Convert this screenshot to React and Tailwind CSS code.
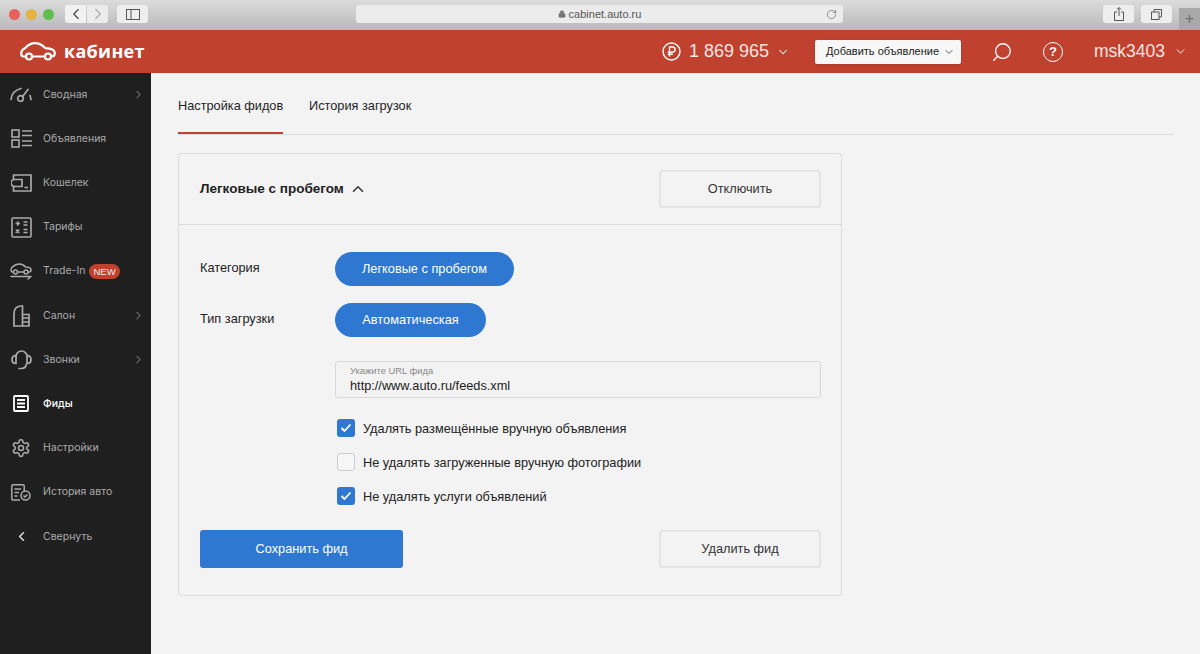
import { ChevronDown, ChevronLeft, ChevronRight, ChevronUp, RotateCw, Lock, Search } from 'lucide-react';

const Gauge = () => (
    <svg width="22" height="15" viewBox="0 0 22 15" fill="none" stroke="currentColor" strokeWidth="1.700" strokeLinecap="round">
        <path d="M1 12.500C1.500 7 5 3 11 1.500" />
        <path d="M13 9l5-6.500" />
        <circle cx="10.500" cy="11.500" r="2.800" />
        <path d="M20 8.500l1 4" />
    </svg>
);

const Listing = () => (
    <svg width="21" height="19" viewBox="0 0 21 19" fill="none" stroke="currentColor" strokeWidth="1.600">
        <rect x="1" y="1" width="7" height="7" />
        <rect x="1" y="11" width="7" height="7" />
        <path d="M11 2h10M11 6.500h10M11 12h10M11 16.500h10" />
    </svg>
);

const Wallet = () => (
    <svg width="21" height="18" viewBox="0 0 21 18" fill="none" stroke="currentColor" strokeWidth="1.700">
        <path d="M2.500 5.500V1h17.500v16H2.500v-4.500" />
        <path d="M11 5.500H3.500a3.500 3.500 0 0 0 0 7H11z" />
        <path d="M13.500 13.500h3.500" />
    </svg>
);

const Calc = () => (
    <svg width="21" height="21" viewBox="0 0 21 21" fill="none" stroke="currentColor" strokeWidth="1.600">
        <rect x="1" y="1" width="19" height="19" rx="1" />
        <path d="M4.500 6.500h4.500M6.750 4.250v4.500M12.500 5h4M12.500 8h4M4.800 12.500l3.500 3.500M8.300 12.500l-3.500 3.500M12.500 12.500h4M12.500 15.500h4" />
    </svg>
);

const TradeIn = () => (
    <svg width="22" height="17" viewBox="0 0 22 17" fill="none" stroke="currentColor" strokeWidth="1.500" strokeLinecap="round" strokeLinejoin="round">
        <path d="M3.500 9H2.200C1.200 9 1 8 1 7c0-1.500.5-2.500 1.500-3C5 1.500 7.500 1 9.500 1c2.500 0 4.500 1.200 6 3 3 0 5.500 1 5.500 3 0 1.300-.8 2-2 2h-.5" />
        <path d="M8 9h6" />
        <circle cx="5.500" cy="9" r="2" />
        <circle cx="16" cy="9" r="2" />
        <path d="M1 13.500h20l-3 2.500" />
    </svg>
);

const Salon = () => (
    <svg width="17" height="22" viewBox="0 0 17 22" fill="none" stroke="currentColor" strokeWidth="1.700">
        <path d="M1 21V8.500C1 4.500 3.500 1.500 7.500 1H9.500v20z" />
        <path d="M9.500 9.500h6.500v11.500H9.500" />
        <path d="M10 13h6M10 17h6" />
    </svg>
);

const Headset = () => (
    <svg width="21" height="20" viewBox="0 0 21 20" fill="none" stroke="currentColor" strokeWidth="1.700" strokeLinecap="round">
        <path d="M5 6.500C5 3.500 7.500 1 10.500 1S16 3.500 16 6.500" />
        <path d="M5 5.500v8C2.500 13.500 1 11.800 1 9.500S2.500 5.500 5 5.500z" />
        <path d="M16 5.500v8c2.500 0 4-1.700 4-4s-1.500-4-4-4z" />
        <path d="M15.500 14c-.5 2.500-2.500 4.500-5 4.500H8" />
    </svg>
);

const Feeds = () => (
    <svg width="16" height="17" viewBox="0 0 16 17" fill="none" stroke="currentColor" strokeWidth="1.800">
        <rect x="1" y="1" width="14" height="15" rx="1" />
        <path d="M4 5h8M4 8.500h8M4 12h8" />
    </svg>
);

const Gear = () => (
    <svg width="20" height="20" viewBox="0 0 24 24" fill="none" stroke="currentColor" strokeWidth="1.900" strokeLinejoin="round">
        <path d="M12.220 2h-.44a2 2 0 0 0-2 2v.18a2 2 0 0 1-1 1.730l-.43.250a2 2 0 0 1-2 0l-.150-.080a2 2 0 0 0-2.730.730l-.220.380a2 2 0 0 0 .730 2.730l.150.100a2 2 0 0 1 1 1.720v.510a2 2 0 0 1-1 1.740l-.150.090a2 2 0 0 0-.730 2.730l.220.380a2 2 0 0 0 2.730.730l.150-.080a2 2 0 0 1 2 0l.430.250a2 2 0 0 1 1 1.730V20a2 2 0 0 0 2 2h.44a2 2 0 0 0 2-2v-.18a2 2 0 0 1 1-1.730l.430-.250a2 2 0 0 1 2 0l.150.080a2 2 0 0 0 2.730-.730l.220-.390a2 2 0 0 0-.730-2.730l-.150-.080a2 2 0 0 1-1-1.740v-.500a2 2 0 0 1 1-1.740l.150-.090a2 2 0 0 0 .730-2.730l-.220-.380a2 2 0 0 0-2.730-.730l-.150.080a2 2 0 0 1-2 0l-.430-.250a2 2 0 0 1-1-1.730V4a2 2 0 0 0-2-2z" />
        <circle cx="12" cy="12" r="3" />
    </svg>
);

const History = () => (
    <svg width="20" height="17" viewBox="0 0 20 17" fill="none" stroke="currentColor" strokeWidth="1.500">
        <path d="M9 16H2a1.200 1.200 0 0 1-1.200-1.200V2A1.200 1.200 0 0 1 2 .8h10A1.200 1.200 0 0 1 13.200 2v5" />
        <path d="M3.500 5h6.500M3.500 8.500h4.500M3.500 12h3" />
        <circle cx="14.500" cy="11.500" r="4.500" />
        <path d="M12.500 11.500l1.500 1.500 2.500-2.500" />
    </svg>
);

const menu = [
    { icon: <Gauge />, label: 'Сводная', arrow: true },
    { icon: <Listing />, label: 'Объявления' },
    { icon: <Wallet />, label: 'Кошелек' },
    { icon: <Calc />, label: 'Тарифы' },
    { icon: <TradeIn />, label: 'Trade-In', badge: true },
    { icon: <Salon />, label: 'Салон', arrow: true },
    { icon: <Headset />, label: 'Звонки', arrow: true },
    { icon: <Feeds />, label: 'Фиды', active: true },
    { icon: <Gear />, label: 'Настройки' },
    { icon: <History />, label: 'История авто' },
    { icon: <ChevronLeft size={15} strokeWidth={2.500} className="text-[#ddd]" />, label: 'Свернуть' },
];

const Light = ({ color }) => <span className={`w-[11px] h-[11px] rounded-full ${color}`} />;

const BrowserBar = () => (
    <div className="h-[30px] flex bg-gradient-to-b from-[#dcdcdc] to-[#b9b9b9] shrink-0">
        <div className="flex items-center gap-[6px] pl-[9px] pb-[2px]">
            <Light color="bg-[#e9605a]" />
            <Light color="bg-[#e5b33f]" />
            <Light color="bg-[#5fbf4e]" />
        </div>
        <div className="flex items-center gap-px ml-[11px] pb-[2px]">
            <div className="w-[21px] h-[18px] rounded-l-[3px] bg-[#f1f1f1] flex items-center justify-center">
                <ChevronLeft size={18} strokeWidth={1.500} className="text-[#444]" />
            </div>
            <div className="w-[21px] h-[18px] rounded-r-[3px] bg-[#ececec] flex items-center justify-center">
                <ChevronRight size={18} strokeWidth={1.500} className="text-[#aaa]" />
            </div>
        </div>
        <div className="flex items-center ml-[9px] pb-[2px]">
            <div className="w-[31px] h-[18px] rounded-[3px] bg-[#eeeeee] flex items-center justify-center">
                <svg width="14" height="11" viewBox="0 0 14 11" fill="none" stroke="#555" strokeWidth="1">
                    <rect x="0.500" y="0.500" width="13" height="10" />
                    <path d="M5 0.500v10" />
                </svg>
            </div>
        </div>
        <div className="flex items-center ml-[208px] pb-[2px]">
            <div className="w-[487px] h-[18px] rounded-[3px] bg-[#ececec] relative flex items-center justify-center gap-[3px] text-[11px] text-[#555] font-['Liberation_Sans',sans-serif]">
                <Lock size={8} className="text-[#777]" fill="#777" />
                <span>cabinet.auto.ru</span>
                <RotateCw size={11} strokeWidth={1.500} className="absolute right-[6px] top-[4px] text-[#666]" />
            </div>
        </div>
        <div className="flex items-center ml-[260px] pb-[2px] gap-[7px]">
            <div className="w-[31px] h-[18px] rounded-[3px] bg-[#eeeeee] flex items-center justify-center">
                <svg width="10" height="14" viewBox="0 0 10 14" fill="none" stroke="#555" strokeWidth="1">
                    <path d="M3 5H.5v8.500h9V5H7" />
                    <path d="M5 9V.800M3 2.500 5 .500l2 2" />
                </svg>
            </div>
            <div className="w-[31px] h-[18px] rounded-[3px] bg-[#eeeeee] flex items-center justify-center">
                <svg width="11" height="11" viewBox="0 0 11 11" fill="none" stroke="#555" strokeWidth="1">
                    <rect x="0.500" y="3" width="7.500" height="7.500" />
                    <path d="M3 3V.500h7.500V8H8" />
                </svg>
            </div>
        </div>
        <div className="ml-[7px] mt-[8px] w-[21px] h-[22px] bg-[#a9a9a9] flex items-center justify-center text-[#6f6f6f] text-[16px] font-['Liberation_Sans',sans-serif]">+</div>
    </div>
);

const TopBar = () => (
    <div className="h-[43px] bg-[#c1412f] flex items-center text-white shrink-0 whitespace-nowrap font-['Liberation_Sans',sans-serif]">
        <div className="ml-[20px] w-[36px] flex">
            <svg width="36" height="19" viewBox="0 0 36 19" fill="none" stroke="white" strokeWidth="2.200" strokeLinejoin="round" strokeLinecap="round">
                <path d="M6 14.500H3.500C2 14.500 1.200 13.500 1.200 12c0-3 1.500-5 3.800-5.800C8 3 11 1.200 15 1.200c4.500 0 7.500 2 10.500 5 4 .2 9.300 1 9.300 4.800 0 2-1.200 3.500-3 3.500H31" />
                <path d="M12 14.500h13" />
                <circle cx="9" cy="14.500" r="3" />
                <circle cx="28" cy="14.500" r="3" />
            </svg>
        </div>
        <span className="ml-[8px] text-[18px] font-bold tracking-[0.3px] font-['Open_Sans',sans-serif] leading-none pb-[2px]">кабинет</span>

        <div className="ml-auto flex items-center pr-[13px]">
            <svg width="19" height="19" viewBox="0 0 19 19" fill="none" stroke="white" strokeWidth="1.400">
                <circle cx="9.500" cy="9.500" r="8.500" />
                <path d="M7.500 14.500V5h3a2.500 2.500 0 0 1 0 5.200H5.800M5.800 12.300h5" />
            </svg>
            <span className="ml-[8px] text-[18px] text-[#f6e5e2]">1 869 965</span>
            <ChevronDown size={14} strokeWidth={1.800} className="ml-[7px]" />
            <div className="ml-[25px] w-[146px] h-[24px] rounded-[2px] bg-[#f7f7f7] text-[#222] text-[11px] flex items-center pl-[11px] gap-[4px] shadow-sm">
                Добавить объявление
                <ChevronDown size={12} strokeWidth={1.500} />
            </div>
            <Search size={22} strokeWidth={1.500} className="ml-[30px] -scale-x-100" />
            <div className="ml-[30px] w-[20px] h-[20px] rounded-full border-[1.500px] border-white flex items-center justify-center text-[13px] font-bold">?</div>
            <span className="ml-[31px] text-[17.500px] text-[#f6e5e2]">msk3403</span>
            <ChevronDown size={13} strokeWidth={1.800} className="ml-[9px]" />
        </div>
    </div>
);

const Sidebar = () => (
    <div className="w-[151px] bg-[#1f1f1f] shrink-0 font-['Inter',sans-serif]">
        {menu.map( item => (
            <div key={item.label} className={`h-[44.2px] pb-[1px] flex items-center relative ${ item.active ? 'text-white' : 'text-[#aaaaaa]' }`}>
                <div className="w-[43px] shrink-0 pl-[10px] pr-[11px] flex justify-center">{item.icon}</div>
                <span className={`text-[10.500px] ${ item.active ? 'font-medium' : '' }`}>{item.label}</span>
                {item.badge && <span className="ml-[4px] h-[15px] px-[4px] rounded-full bg-[#c1412f] text-[#eee] text-[9.500px] leading-[15px] font-['Liberation_Sans',sans-serif]">NEW</span>}
                {item.arrow && <ChevronRight size={13} strokeWidth={1.500} className="absolute right-[6px] top-[15px]" />}
            </div>
        ))}
    </div>
);

const Outline = ({ children }) => (
    <div className="w-[162px] h-[38px] border-2 border-[#e5e5e5] rounded-[3px] flex items-center justify-center text-[12.750px] text-[#333]">{children}</div>
);

const Pill = ({ width, children }) => (
    <div className={`h-[34px] ${width} rounded-full bg-[#2f78d2] text-white text-[12.750px] flex items-center justify-center`}>{children}</div>
);

const Check = ({ checked, children }) => (
    <div className="h-[34px] flex items-center pl-[2px]">
        { checked ?
            <div className="w-[18px] h-[18px] rounded-[3px] bg-[#2f78d2] flex items-center justify-center">
                <svg width="12" height="10" viewBox="0 0 12 10" fill="none" stroke="white" strokeWidth="1.800"><path d="M1.500 5l3 3 6-6.500" /></svg>
            </div>
            :
            <div className="w-[18px] h-[18px] rounded-[3px] border border-[#cccccc] bg-[#f6f6f6]" />
        }
        <span className="ml-[8px] pt-[1px] text-[12.750px] text-[#222]">{children}</span>
    </div>
);

const Content = () => (
    <div className="flex-1 bg-[#f3f3f3] pl-[27px] pr-[26px] font-['Liberation_Sans',sans-serif]">
        <div className="h-[62px] flex border-b border-[#dcdcdc] text-[12.750px] text-[#1f1f1f]">
            <div className="h-[61px] w-[105px] border-b-2 border-[#c1412f] pt-[23px] whitespace-nowrap">Настройка фидов</div>
            <div className="ml-[26px] pt-[23px]">История загрузок</div>
        </div>

        <div className="mt-[18px] w-[664px] h-[443px] border border-[#dcdcdc] rounded-[3px]">
            <div className="h-[71px] border-b border-[#dcdcdc] flex items-center pl-[21px] pr-[20px]">
                <span className="text-[13.500px] font-bold text-[#222]">Легковые с пробегом</span>
                <ChevronUp size={18} strokeWidth={2} className="ml-[5px] text-[#333]" />
                <div className="ml-auto mb-[1px]"><Outline>Отключить</Outline></div>
            </div>

            <div className="pl-[21px] pr-[20px] pt-[27px]">
                <div className="flex items-center">
                    <span className="w-[135px] text-[12.750px] text-[#222] pb-[3px]">Категория</span>
                    <Pill width="w-[179px]">Легковые с пробегом</Pill>
                </div>
                <div className="flex items-center mt-[17px]">
                    <span className="w-[135px] text-[12.750px] text-[#222] pb-[3px]">Тип загрузки</span>
                    <Pill width="w-[151px]">Автоматическая</Pill>
                </div>
                <div className="ml-[135px] mt-[24px] h-[37px] border border-[#d9d9d9] rounded-[3px] pl-[14px] pt-[3px]">
                    <div className="text-[9.400px] leading-[12px] text-[#888]">Укажите URL фида</div>
                    <div className="text-[12.750px] leading-[17px] text-[#222]">http://www.auto.ru/feeds.xml</div>
                </div>
                <div className="ml-[135px] mt-[13px]">
                    <Check checked>Удалять размещённые вручную объявления</Check>
                    <Check>Не удалять загруженные вручную фотографии</Check>
                    <Check checked>Не удалять услуги объявлений</Check>
                </div>
                <div className="flex justify-between items-center mt-[17px]">
                    <div className="w-[203px] h-[38px] rounded-[3px] bg-[#2f78d2] text-white text-[12.750px] flex items-center justify-center">Сохранить фид</div>
                    <Outline>Удалить фид</Outline>
                </div>
            </div>
        </div>
    </div>
);

export default function App() {
    return (
        <div className="w-[1200px] h-[654px] flex flex-col overflow-hidden bg-[#f3f3f3]">
            <BrowserBar />
            <TopBar />
            <div className="flex flex-1 min-h-0">
                <Sidebar />
                <Content />
            </div>
        </div>
    );
}
